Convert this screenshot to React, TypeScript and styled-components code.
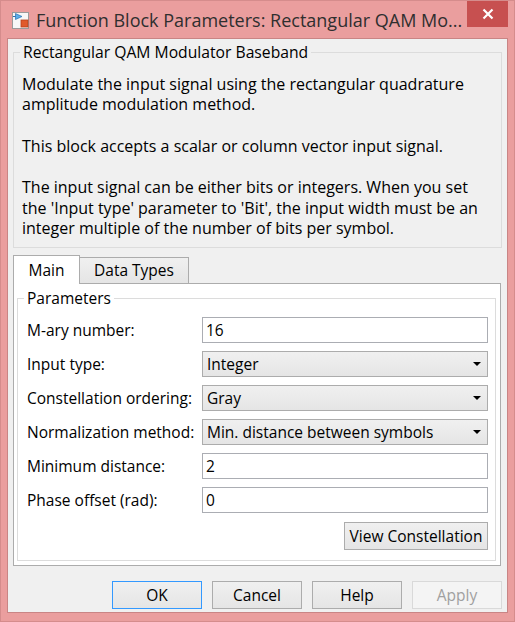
import { Fragment } from 'react';
import styled, { createGlobalStyle } from 'styled-components';

const GlobalStyle = createGlobalStyle`
  html, body {
    margin: 0;
    padding: 0;
    background: #ffffff;
  }
  body {
    font-family: 'Open Sans', 'Noto Sans', sans-serif;
  }
`;

const FONT = `'Open Sans', 'Noto Sans', sans-serif`;

const Window = styled.div`
  width: 515px;
  height: 622px;
  box-sizing: border-box;
  background: #ea9e9e;
  border: 1px solid #d58c8c;
  display: flex;
  flex-direction: column;
`;

const TitleBar = styled.div`
  height: 37px;
  display: flex;
  align-items: flex-start;
  padding-left: 11px;
`;

const TitleIcon = styled.svg`
  width: 17px;
  height: 17px;
  margin-top: 11px;
  flex-shrink: 0;
`;

const TitleText = styled.div`
  font-family: ${FONT};
  font-size: 18px;
  line-height: 20px;
  color: #2f2f2f;
  margin-left: 7px;
  margin-top: 9px;
  white-space: nowrap;
  flex: 1;
`;

const CloseButton = styled.div`
  width: 41px;
  height: 26px;
  background: #c75050;
  display: flex;
  align-items: center;
  justify-content: center;
  margin-right: 6px;
`;

const Client = styled.div`
  flex: 1;
  margin: 0 6px 8px 6px;
  background: #f0f0f0;
  border: 1px solid #c98585;
  display: flex;
  flex-direction: column;
  padding: 0 5px 0 5px;
`;

const Group = styled.fieldset`
  margin: 5px 0 0 0;
  padding: 12.5px 0 8px 8px;
  border: 1px solid #dcdcdc;
  font-family: ${FONT};
  font-size: 15.5px;
  color: #000;
`;

const Legend = styled.legend`
  padding: 0 3px;
  margin-left: -2px;
  line-height: 17px;
  font-size: 15.7px;
`;

const Paragraph = styled.p`
  margin: 0 0 20.7px 0;
  font-size: 16px;
  line-height: 20.7px;
  &:last-child {
    margin-bottom: 0;
  }
`;

const TabRow = styled.div`
  display: flex;
  align-items: flex-end;
  margin-top: 7px;
  height: 29px;
  position: relative;
  z-index: 1;
  margin-bottom: -1px;
`;

const Tab = styled.div<{ $active?: boolean }>`
  box-sizing: border-box;
  width: ${(p) => (p.$active ? '67px' : '110px')};
  height: ${(p) => (p.$active ? '29px' : '27px')};
  padding-top: ${(p) => (p.$active ? '5px' : '3px')};
  text-align: center;
  border: 1px solid #acacac;
  border-bottom: ${(p) => (p.$active ? 'none' : '1px solid #acacac')};
  margin-left: ${(p) => (p.$active ? '0' : '-1px')};
  background: ${(p) => (p.$active ? '#ffffff' : 'linear-gradient(#f0f0f0, #e5e5e5)')};
  font-family: ${FONT};
  font-size: 15.5px;
  color: #000;
  line-height: 18px;
`;

const TabPanel = styled.div`
  width: 488px;
  box-sizing: border-box;
  height: 283px;
  background: #ffffff;
  border: 1px solid #acacac;
  padding: 6px 4px 4px 3px;
  display: flex;
`;

const ParamGroup = styled.fieldset`
  flex: 1;
  margin: 0;
  padding: 10px 7px 10px 9px;
  border: 1px solid #dcdcdc;
  font-family: ${FONT};
  font-size: 15.5px;
  color: #000;
  display: grid;
  grid-template-columns: 175px 1fr;
  row-gap: 8px;
  align-items: center;
  align-content: start;
`;

const ParamLegend = styled.legend`
  padding: 0 3px;
  margin-left: -3px;
  line-height: 17px;
`;

const Label = styled.div`
  white-space: nowrap;
  line-height: 20px;
`;

const TextField = styled.div`
  height: 26px;
  box-sizing: border-box;
  border: 1px solid #abadb3;
  background: #ffffff;
  padding: 0 3px;
  display: flex;
  align-items: center;
`;

const Select = styled.div`
  height: 26px;
  box-sizing: border-box;
  border: 1px solid #acacac;
  background: linear-gradient(#f0f0f0, #e5e5e5);
  padding: 0 6px 0 4px;
  display: flex;
  align-items: center;
  justify-content: space-between;
`;

const Arrow = styled.span`
  width: 0;
  height: 0;
  border-left: 4px solid transparent;
  border-right: 4px solid transparent;
  border-top: 4px solid #000;
`;

const ViewRow = styled.div`
  grid-column: 1 / span 2;
  display: flex;
  justify-content: flex-end;
  margin-top: 1px;
`;

const Button = styled.div<{ $variant?: 'default' | 'disabled' }>`
  height: 28px;
  box-sizing: border-box;
  border: 1px solid
    ${(p) => (p.$variant === 'default' ? '#3399ff' : p.$variant === 'disabled' ? '#d9d9d9' : '#acacac')};
  background: ${(p) => (p.$variant === 'disabled' ? '#f4f4f4' : 'linear-gradient(#f0f0f0, #e5e5e5)')};
  color: ${(p) => (p.$variant === 'disabled' ? '#a0a0a0' : '#000')};
  font-family: ${FONT};
  font-size: 15.5px;
  display: flex;
  align-items: center;
  justify-content: center;
`;

const ViewButton = styled(Button)`
  width: 144px;
`;

const FooterButton = styled(Button)`
  width: 90px;
`;

const Footer = styled.div`
  display: flex;
  justify-content: flex-end;
  gap: 10px;
  margin-top: 15px;
`;

const params: { label: string; value: string; kind: 'text' | 'select' }[] = [
  { label: 'M-ary number:', value: '16', kind: 'text' },
  { label: 'Input type:', value: 'Integer', kind: 'select' },
  { label: 'Constellation ordering:', value: 'Gray', kind: 'select' },
  { label: 'Normalization method:', value: 'Min. distance between symbols', kind: 'select' },
  { label: 'Minimum distance:', value: '2', kind: 'text' },
  { label: 'Phase offset (rad):', value: '0', kind: 'text' },
];

const App = () => {
  return (
    <>
      <GlobalStyle />
      <Window>
        <TitleBar>
          <TitleIcon viewBox="0 0 17 17">
            <rect x="0.5" y="0.5" width="16" height="16" fill="#f7f7f7" stroke="#9a9a9a" />
            <path d="M3.5 1.5 L10 4.5 L3.5 7.5 Z" fill="#5aaee8" stroke="#2a6fb0" strokeWidth="0.7" />
            <line x1="1" y1="4.5" x2="3.5" y2="4.5" stroke="#2a6fb0" />
            <rect x="9" y="8" width="7" height="7" fill="#e05a2b" stroke="#b8401a" strokeWidth="0.8" />
          </TitleIcon>
          <TitleText>Function Block Parameters: Rectangular QAM Mo...</TitleText>
          <CloseButton>
            <svg width="12" height="12" viewBox="0 0 12 12">
              <path d="M1.5 1.5 L10.5 10.5 M10.5 1.5 L1.5 10.5" stroke="#ffffff" strokeWidth="2.2" />
            </svg>
          </CloseButton>
        </TitleBar>
        <Client>
          <Group>
            <Legend>Rectangular QAM Modulator Baseband</Legend>
            <Paragraph>
              Modulate the input signal using the rectangular quadrature
              <br />
              amplitude modulation method.
            </Paragraph>
            <Paragraph>This block accepts a scalar or column vector input signal.</Paragraph>
            <Paragraph>
              The input signal can be either bits or integers. When you set
              <br />
              the 'Input type' parameter to 'Bit', the input width must be an
              <br />
              integer multiple of the number of bits per symbol.
            </Paragraph>
          </Group>
          <TabRow>
            <Tab $active>Main</Tab>
            <Tab>Data Types</Tab>
          </TabRow>
          <TabPanel>
            <ParamGroup>
              <ParamLegend>Parameters</ParamLegend>
              {params.map((p) => (
                <Fragment key={p.label}>
                  <Label>{p.label}</Label>
                  {p.kind === 'text' ? (
                    <TextField>{p.value}</TextField>
                  ) : (
                    <Select>
                      <span>{p.value}</span>
                      <Arrow />
                    </Select>
                  )}
                </Fragment>
              ))}
              <ViewRow>
                <ViewButton>View Constellation</ViewButton>
              </ViewRow>
            </ParamGroup>
          </TabPanel>
          <Footer>
            <FooterButton $variant="default">OK</FooterButton>
            <FooterButton>Cancel</FooterButton>
            <FooterButton>Help</FooterButton>
            <FooterButton $variant="disabled">Apply</FooterButton>
          </Footer>
        </Client>
      </Window>
    </>
  );
};

export default App;
